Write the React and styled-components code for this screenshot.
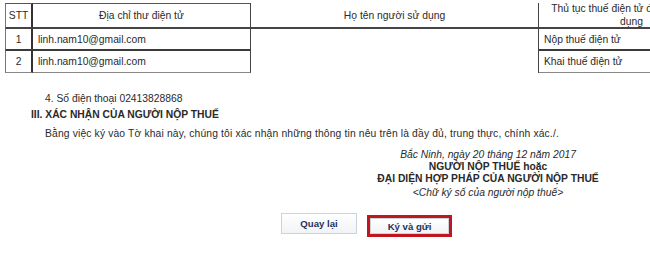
import styled, { createGlobalStyle } from "styled-components";

const Global = createGlobalStyle`
  body {
    margin: 0;
    background: #fff;
    overflow: hidden;
    font-family: "Liberation Sans", Arial, sans-serif;
    font-size: 10.3px;
    color: #2a2a2a;
  }
`;

const Page = styled.div`
  width: 650px;
  height: 253px;
  padding: 3px 0 0 5px;
  box-sizing: border-box;
  overflow: hidden;
`;

const Grid = styled.div`
  display: grid;
  grid-template-columns: 28px 218px 288px 186px;
  grid-template-rows: 26px 22px 22px;
  width: max-content;
`;

const Cell = styled.div`
  display: flex;
  align-items: center;
  justify-content: ${(p) => p.$align || "flex-start"};
  padding: 0 ${(p) => (p.$first ? 2 : 5)}px;
  box-sizing: border-box;
  line-height: 13px;
  border-left: ${(p) => (p.$first ? "1px solid #777" : "none")};
  border-right: ${(p) => (p.$first ? "2px solid #333" : "1px solid #444")};
  border-top: ${(p) => (p.$top ? "1px solid #555" : "none")};
  border-bottom: ${(p) => p.$bottom || "none"};
`;

const HeadText = styled.span`
  display: block;
  width: 100%;
  text-align: center;
`;

const Section = styled.div`
  padding-left: ${(p) => p.$indent}px;
  margin-top: ${(p) => p.$mt || 0}px;
  line-height: 14px;
  font-weight: ${(p) => (p.$bold ? 700 : 400)};
  letter-spacing: ${(p) => p.$spread || 0}px;
  white-space: nowrap;
`;

const SignRow = styled.div`
  display: flex;
  justify-content: flex-end;
  margin-top: 8px;
`;

const SignBlock = styled.div`
  width: 324px;
  text-align: center;
  line-height: 12px;
`;

const SignLine = styled.div`
  font-style: ${(p) => (p.$italic ? "italic" : "normal")};
  font-weight: ${(p) => (p.$bold ? 700 : 400)};
  margin-top: ${(p) => p.$mt || 0}px;
  white-space: nowrap;
`;

const Actions = styled.div`
  display: flex;
  align-items: flex-start;
  gap: 10px;
  padding-left: 276px;
  margin-top: 14px;
`;

const Button = styled.button`
  width: ${(p) => p.$w}px;
  height: ${(p) => p.$h}px;
  border: 1px solid #c9d4df;
  background: linear-gradient(#ffffff, #f1f3f6);
  font-family: "Liberation Sans", Arial, sans-serif;
  font-size: 9.6px;
  font-weight: 700;
  color: #1f3259;
  padding: 0;
  cursor: pointer;
`;

const Highlight = styled.div`
  margin-top: 2px;
  border: 3px solid #c2161f;
  display: flex;
`;

const headBottom = "2px solid #444";
const row1Bottom = "2px solid #3a3a3a";
const row2Bottom = "1px solid #888";

const rows = [
  { n: "1", email: "linh.nam10@gmail.com", proc: "Nộp thuế điện tử", bottom: row1Bottom },
  { n: "2", email: "linh.nam10@gmail.com", proc: "Khai thuế điện tử", bottom: row2Bottom },
];

export default function App() {
  return (
    <Page>
      <Global />
      <Grid>
        <Cell $first $top $bottom={headBottom} $align="center">STT</Cell>
        <Cell $top $bottom={headBottom} $align="center">Địa chỉ thư điện tử</Cell>
        <Cell $bottom={headBottom} $align="center">Họ tên người sử dụng</Cell>
        <Cell $bottom={headBottom}>
          <HeadText>Thủ tục thuế điện tử đã đăng ký sử dụng</HeadText>
        </Cell>
        {rows.map((r) => [
          <Cell key={r.n + "a"} $first $bottom={r.bottom} $align="center">{r.n}</Cell>,
          <Cell key={r.n + "b"} $bottom={r.bottom}>{r.email}</Cell>,
          <Cell key={r.n + "c"} />,
          <Cell key={r.n + "d"} $bottom={r.bottom}>{r.proc}</Cell>,
        ])}
      </Grid>

      <Section $indent={40} $mt={19}>4. Số điện thoại 02413828868</Section>
      <Section $indent={26} $mt={2} $bold>III. XÁC NHẬN CỦA NGƯỜI NỘP THUẾ</Section>
      <Section $indent={40} $mt={5} $spread={0.15}>
        Bằng việc ký vào Tờ khai này, chúng tôi xác nhận những thông tin nêu trên là đầy đủ, trung thực, chính xác./.
      </Section>

      <SignRow>
        <SignBlock>
          <SignLine $italic>Bắc Ninh, ngày 20 tháng 12 năm 2017</SignLine>
          <SignLine $bold>NGƯỜI NỘP THUẾ hoặc</SignLine>
          <SignLine $bold>ĐẠI DIỆN HỢP PHÁP CỦA NGƯỜI NỘP THUẾ</SignLine>
          <SignLine $italic $mt={2}>&lt;Chữ ký số của người nộp thuế&gt;</SignLine>
        </SignBlock>
      </SignRow>

      <Actions>
        <Button $w={76} $h={21}>Quay lại</Button>
        <Highlight>
          <Button $w={79} $h={16}>Ký và gửi</Button>
        </Highlight>
      </Actions>
    </Page>
  );
}
